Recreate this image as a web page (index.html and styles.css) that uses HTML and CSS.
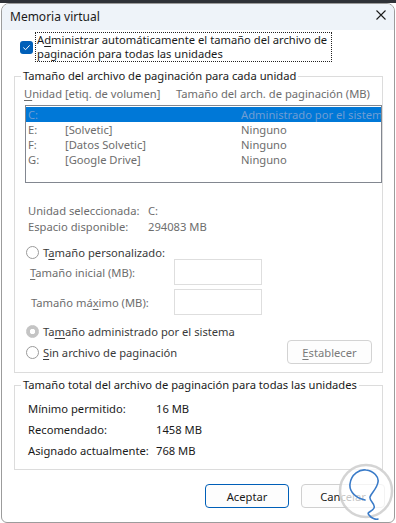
FILE: index.html
```html
<!DOCTYPE html>
<html lang="es">
<head>
<meta charset="utf-8">
<title>Memoria virtual</title>
<link rel="stylesheet" href="styles.css">
</head>
<body>
<div class="backdrop"></div>
<div class="window">
  <div class="titlebar">
    <span class="title">Memoria virtual</span>
    <svg class="close" width="10" height="10" viewBox="0 0 10 10"><path d="M0.5 0.5 L9.5 9.5 M9.5 0.5 L0.5 9.5" stroke="#1b1b1b" stroke-width="1.1" fill="none"/></svg>
  </div>
  <div class="content">
    <div class="autorow">
      <span class="checkbox"><svg width="13" height="13" viewBox="0 0 13 13"><path d="M3.6 6.8 L5.6 8.7 L9.4 4.6" stroke="#fff" stroke-width="1" fill="none" stroke-linecap="round" stroke-linejoin="round"/></svg></span>
      <span class="focuslabel">A<u>d</u>ministrar automáticamente el tamaño del archivo de<br>paginación para todas las unidades</span>
    </div>

    <fieldset class="group g1">
      <legend>Tamaño del archivo de paginación para cada unidad</legend>
      <div class="colheads"><span class="c1"><u>U</u>nidad [etiq. de volumen]</span><span>Tamaño del arch. de paginación (MB)</span></div>
      <div class="listbox">
        <div class="lrow sel"><span>C:</span><span></span><span>Administrado por el sistema</span></div>
        <div class="lrow"><span>E:</span><span>[Solvetic]</span><span>Ninguno</span></div>
        <div class="lrow"><span>F:</span><span>[Datos Solvetic]</span><span>Ninguno</span></div>
        <div class="lrow"><span>G:</span><span>[Google Drive]</span><span>Ninguno</span></div>
      </div>
      <div class="info">
        <span>Unidad seleccionada:</span><span>C:</span>
        <span>Espacio disponible:</span><span>294083 MB</span>
      </div>
      <div class="radio r1"><span class="rb"></span><span>T<u>a</u>maño personalizado:</span></div>
      <div class="field"><span class="flabel"><u>T</u>amaño inicial (MB):</span><span class="input"></span></div>
      <div class="field f2"><span class="flabel">Tamaño má<u>x</u>imo (MB):</span><span class="input"></span></div>
      <div class="radio r2"><span class="rb on"></span><span>Ta<u>m</u>año administrado por el sistema</span></div>
      <div class="lastrow">
        <div class="radio r3"><span class="rb"></span><span><u>S</u>in archivo de paginación</span></div>
        <span class="btn dis"><u>E</u>stablecer</span>
      </div>
    </fieldset>

    <fieldset class="group g2">
      <legend>Tamaño total del archivo de paginación para todas las unidades</legend>
      <div class="totals">
        <span>Mínimo permitido:</span><span>16 MB</span>
        <span>Recomendado:</span><span>1458 MB</span>
        <span>Asignado actualmente:</span><span>768 MB</span>
      </div>
    </fieldset>

    <div class="buttons">
      <span class="btn ok">Aceptar</span>
      <span class="btn cancel">Cancelar</span>
    </div>
  </div>
</div>
<svg class="watermark" width="60" height="63" viewBox="0 0 60 63">
  <circle cx="30" cy="31" r="26" fill="rgba(255,255,255,0.75)" stroke="rgba(205,205,205,0.85)" stroke-width="2.5"/>
  <path d="M29 40 C20 38 13 32 14 24 C15 14 24 9 30 10 C38 11 43 17 42 22 C41 29 35 33 34 37 C33 41 40 44 38 48 C36 52 30 52 33 55 C35 58 40 60 42 59" stroke="#3a7bc8" stroke-width="1.6" fill="none" stroke-linecap="round" stroke-linejoin="round"/>
</svg>
</body>
</html>
```

FILE: styles.css
```css
* { box-sizing: border-box; }
html, body { margin: 0; padding: 0; }
body {
  width: 396px;
  height: 523px;
  overflow: hidden;
  background: #ffffff;
  font-family: "Noto Sans", sans-serif;
  font-size: 11.2px;
  color: #1a1a1a;
  position: relative;
}
u { text-decoration: underline; text-underline-offset: 2px; }

.backdrop { height: 3px; background: #2f3238; }

.window {
  margin: 0 1px;
  height: 520px;
  border: 1px solid #9c9c9c;
  border-radius: 8px 8px 6px 6px;
  background: #ffffff;
  overflow: hidden;
}

.titlebar {
  height: 26px;
  background: #eef3f9;
  display: flex;
  align-items: center;
  padding-left: 8px;
}
.title { line-height: 14px; font-size: 12px; color: #1a1a1a; }
.close { margin-left: auto; margin-right: 8px; align-self: flex-start; margin-top: 6px; }

.content { padding: 0 11px 0 12px; white-space: nowrap; }

.autorow {
  display: flex;
  align-items: center;
  margin-top: 2px;
  padding-left: 6px;
  height: 30px;
}
.checkbox {
  width: 13px;
  height: 13px;
  border-radius: 3px;
  background: #005fb8;
  margin-right: 2px;
  display: flex;
}
.focuslabel {
  border: 1px dotted #222;
  padding: 0 1px;
  line-height: 14px;
  width: 297px;
  height: 30px;
}

.group {
  margin: 0;
  padding: 0 0 8px 0;
  border: 1px solid #dcdcdc;
  min-width: 0;
}
.group legend {
  padding: 0 2px;
  margin-left: 6px;
  line-height: 14px;
  color: #1a1a1a;
}
.g1 { margin-top: 7px; }
.g2 { margin-top: 5px; }

.colheads {
  display: flex;
  margin-top: 4px;
  padding-left: 9px;
  line-height: 14px;
  color: #6d6d6d;
}
.colheads .c1 { width: 152px; }

.listbox {
  margin: 4px 0 0 10px;
  height: 78px;
  border: 1px solid #828790;
  background: #fff;
  padding-top: 1px;
}
.lrow {
  display: grid;
  grid-template-columns: 37px 176px 1fr;
  height: 15px;
  line-height: 15px;
  padding-left: 2px;
  overflow: hidden;
  color: #6d6d6d;
}
.lrow.sel { background: #0078d7; color: #6f9dd3; }

.info {
  display: grid;
  grid-template-columns: 120px auto;
  margin-top: 20px;
  padding-left: 13px;
  line-height: 16px;
  color: #6d6d6d;
}

.radio {
  display: flex;
  align-items: center;
  gap: 4px;
  padding-left: 11px;
  color: #3a3a3a;
}
.r1 { height: 13px; margin-top: 11px; }
.r2 { height: 14px; margin-top: 9px; }
.rb {
  width: 13px;
  height: 13px;
  border-radius: 50%;
  border: 1px solid #9a9a9a;
  background: #fff;
  flex: none;
}
.rb.on {
  border-color: #c4c4c4;
  background: radial-gradient(circle, #ffffff 0, #ffffff 2.4px, #c4c4c4 3px);
}

.field {
  display: flex;
  align-items: center;
  height: 26px;
  padding-left: 15px;
  color: #6d6d6d;
}
.flabel { width: 144px; }
.f2 { margin-top: 4px; padding-left: 16px; }
.f2 .flabel { width: 143px; }
.input {
  width: 88px;
  height: 26px;
  border: 1px solid #dedede;
  background: #fff;
}

.lastrow {
  display: flex;
  align-items: center;
  justify-content: space-between;
  margin-top: 2px;
  height: 24px;
  padding-right: 10px;
}

.btn {
  display: flex;
  align-items: center;
  justify-content: center;
  height: 24px;
  border-radius: 4px;
  background: #fdfdfd;
  border: 1px solid #d3d3d3;
  color: #1a1a1a;
}
.btn.dis { width: 85px; color: #7a7a7a; }

.totals {
  display: grid;
  grid-template-columns: 128px auto;
  margin-top: 6px;
  padding-left: 13px;
  line-height: 21px;
}

.buttons {
  display: flex;
  justify-content: flex-end;
  gap: 12px;
  margin-top: 14px;
  margin-right: -2px;
}
.btn.ok { width: 84px; border-color: #005fb8; }
.btn.cancel { width: 84px; border-color: #d0d0d0; }

.watermark {
  position: absolute;
  left: 336px;
  top: 460px;
}
```
